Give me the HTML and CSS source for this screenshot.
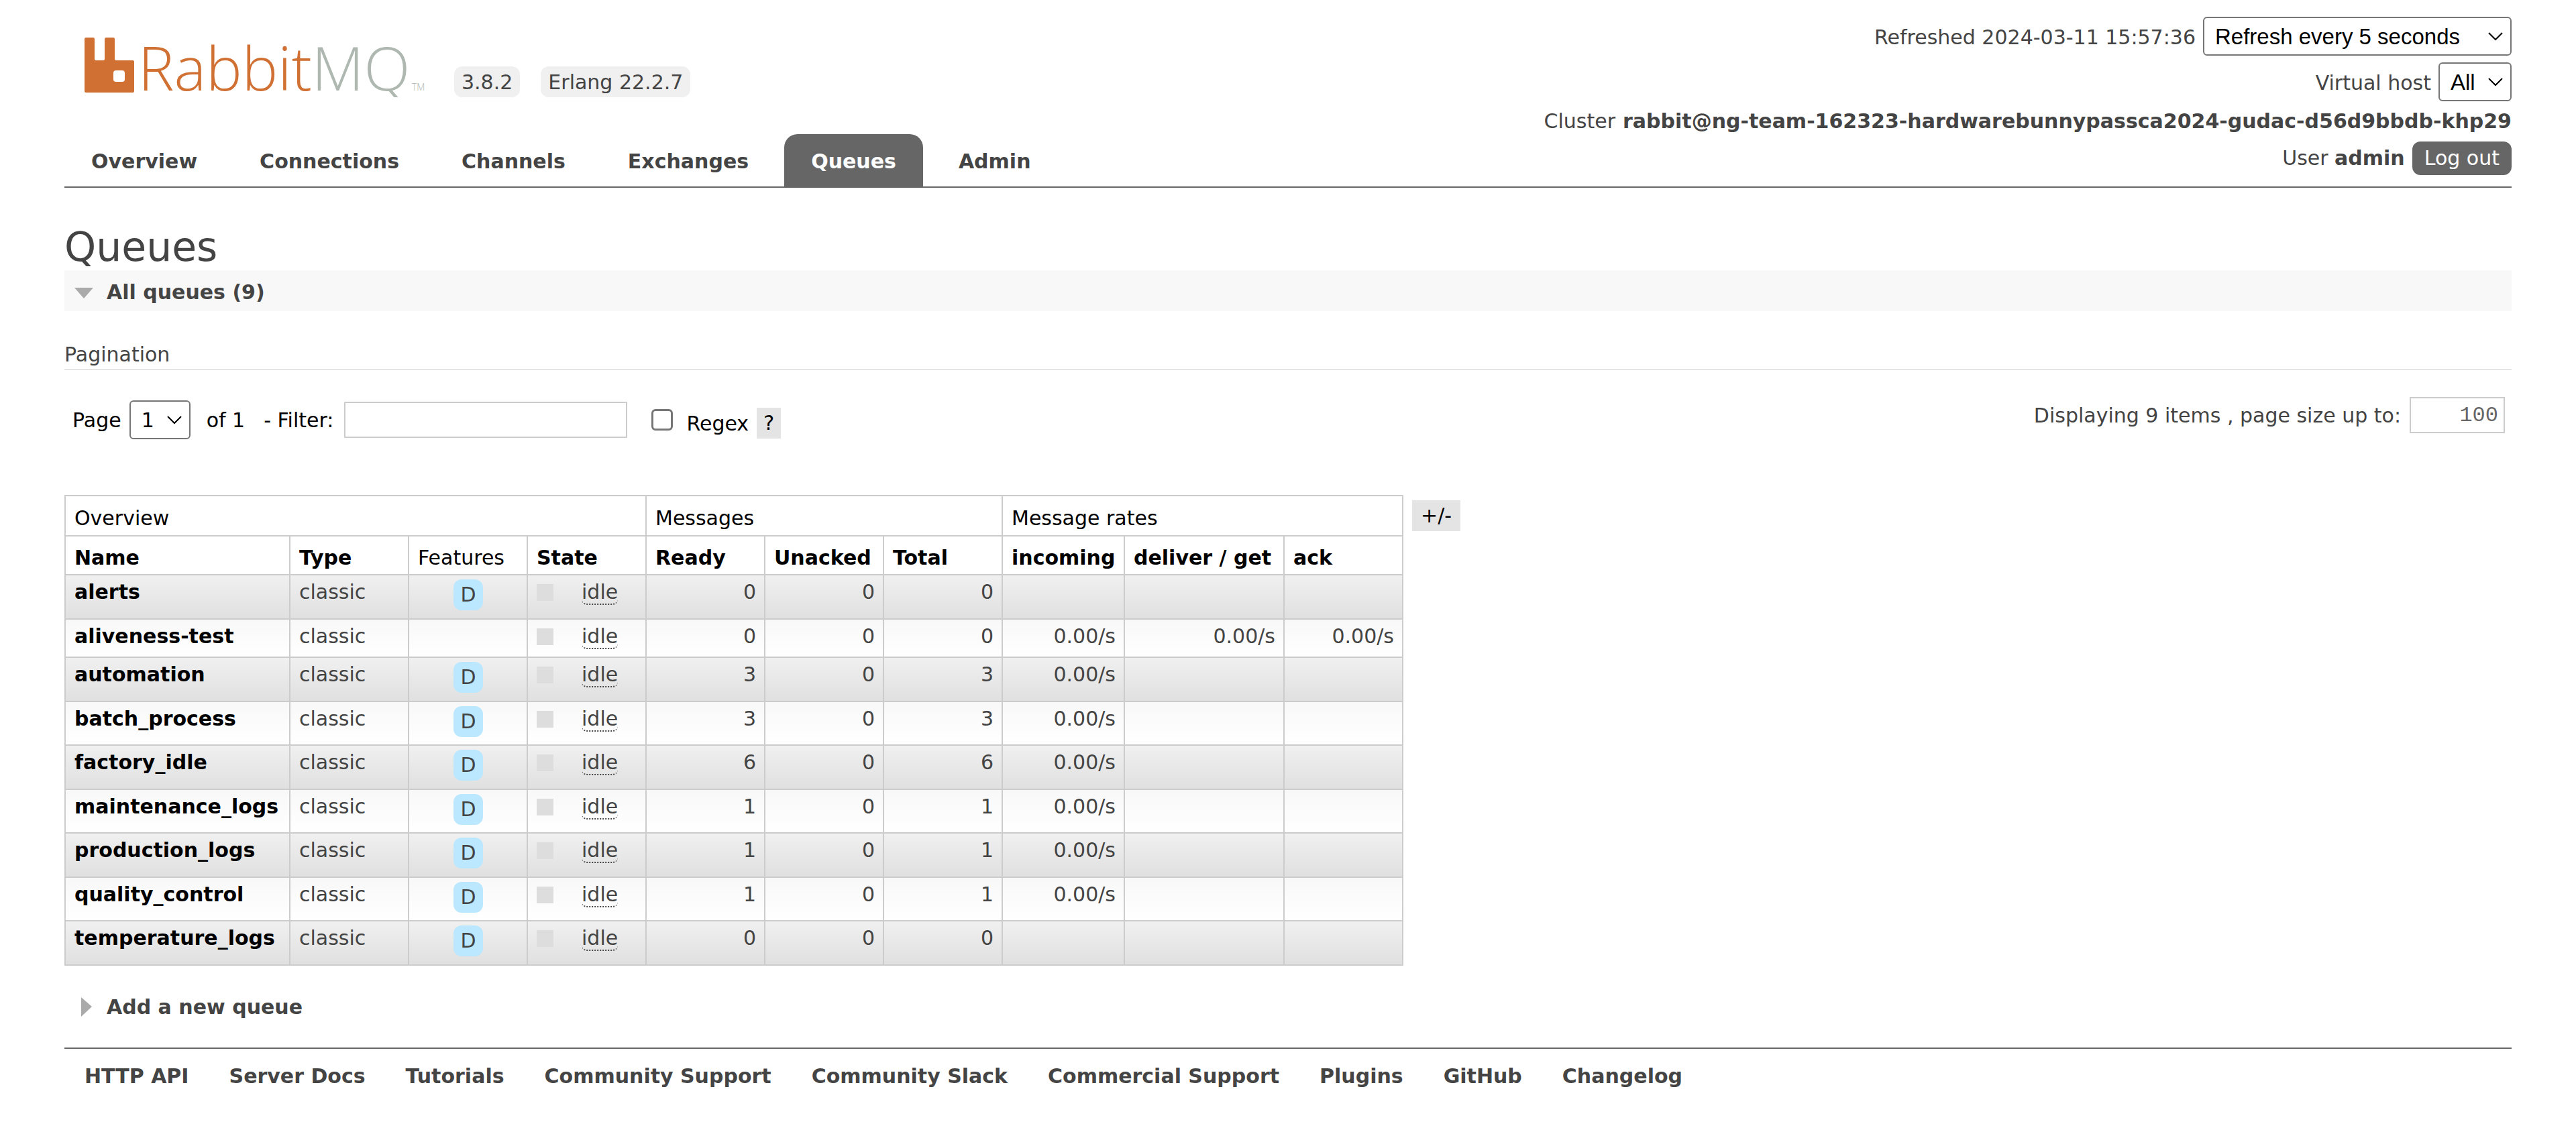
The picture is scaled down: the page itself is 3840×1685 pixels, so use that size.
FILE: index.html
```
<!DOCTYPE html>
<html lang="en">
<head>
    <meta charset="UTF-8">
    <meta name="viewport" content="width=device-width, initial-scale=1.0">
    <title>RabbitMQ Management</title>
    <link rel="stylesheet" href="styles.css">
</head>
<body>
    <header>
        <div class="header-left">
            <div class="brand">
                <svg class="logo" viewBox="0 0 550 105" role="img" aria-label="RabbitMQ">
                    <path fill="#d07033" fill-rule="evenodd" d="M32 16h11q2 0 2 2v30q0 2 2 2h11q2 0 2-2V18q0-2 2-2h11q2 0 2 2v30q0 2 2 2h25q2 0 2 2v44q0 2-2 2H32q-2 0-2-2V18q0-2 2-2zM77 65q-4 0-4 4v9q0 4 4 4h9q4 0 4-4v-9q0-4-4-4z"/>
                    <text class="logo-name" x="110" y="95"><tspan class="logo-rabbit">Rabbit</tspan><tspan class="logo-mq">MQ</tspan></text>
                    <text class="logo-tm" x="518" y="95">TM</text>
                </svg>
                <span class="version">3.8.2</span>
                <span class="version">Erlang 22.2.7</span>
            </div>
            <nav>
                <ul class="tabs">
                    <li><a href="#/">Overview</a></li>
                    <li><a href="#/connections">Connections</a></li>
                    <li><a href="#/channels">Channels</a></li>
                    <li><a href="#/exchanges">Exchanges</a></li>
                    <li><a href="#/queues" class="selected">Queues</a></li>
                    <li><a href="#/users">Admin</a></li>
                </ul>
            </nav>
        </div>

        <ul class="status">
            <li>
                <label for="update-every">Refreshed 2024-03-11 15:57:36</label>
                <select id="update-every" class="update-every">
                    <option>Refresh every 5 seconds</option>
                    <option>Refresh every 30 seconds</option>
                    <option>Do not refresh</option>
                </select>
            </li>
            <li>
                <label for="show-vhost">Virtual host</label>
                <select id="show-vhost" class="show-vhost">
                    <option>All</option>
                    <option>/</option>
                </select>
            </li>
            <li class="cluster">Cluster <b>rabbit@ng-team-162323-hardwarebunnypassca2024-gudac-d56d9bbdb-khp29</b></li>
            <li>
                <span>User <b>admin</b></span>
                <button class="logout">Log out</button>
            </li>
        </ul>
    </header>

    <main>
        <h1>Queues</h1>

        <h2 class="section-title open">
            <svg class="arrow" viewBox="0 0 30 30"><path fill="#aaa" d="M0 8h28L14 24z"/></svg>
            All queues (9)
        </h2>

        <h3>Pagination</h3>
        <div class="pagination">
            <div class="pager">
                <label for="page">Page</label>
                <select id="page" class="page-select"><option>1</option></select>
                <span class="page-count">of 1</span>
                <label for="filter">- Filter:</label>
                <input type="text" id="filter" class="filter">
                <input type="checkbox" id="regex" class="regex-box">
                <label for="regex" class="regex-label">Regex</label>
                <button class="help">?</button>
            </div>
            <div class="page-size">
                <label for="pagesize">Displaying 9 items , page size up to:</label>
                <input type="text" id="pagesize" class="pagesize" value="100">
            </div>
        </div>

        <div class="queues">
            <table class="list">
                <colgroup>
                    <col class="c-name"><col class="c-std"><col class="c-std"><col class="c-std">
                    <col class="c-std"><col class="c-std"><col class="c-std">
                    <col class="c-in"><col class="c-get"><col class="c-std">
                </colgroup>
                <thead>
                    <tr>
                        <th colspan="4">Overview</th>
                        <th colspan="3">Messages</th>
                        <th colspan="3">Message rates</th>
                    </tr>
                    <tr class="columns">
                        <th><a href="#name">Name</a></th>
                        <th><a href="#type">Type</a></th>
                        <th>Features</th>
                        <th><a href="#state">State</a></th>
                        <th><a href="#ready">Ready</a></th>
                        <th><a href="#unacked">Unacked</a></th>
                        <th><a href="#total">Total</a></th>
                        <th><a href="#incoming">incoming</a></th>
                        <th><a href="#deliver">deliver / get</a></th>
                        <th><a href="#ack">ack</a></th>
                    </tr>
                </thead>
                <tbody>
                    <tr class="alt1">
                        <td><a href="#/queues/alerts">alerts</a></td><td>classic</td>
                        <td class="c"><abbr class="tag">D</abbr></td>
                        <td><div class="state"><i></i><abbr>idle</abbr></div></td>
                        <td class="r">0</td><td class="r">0</td><td class="r">0</td>
                        <td class="r"></td><td class="r"></td><td class="r"></td>
                    </tr>
                    <tr class="alt2 short">
                        <td><a href="#/queues/aliveness-test">aliveness-test</a></td><td>classic</td>
                        <td class="c"></td>
                        <td><div class="state"><i></i><abbr>idle</abbr></div></td>
                        <td class="r">0</td><td class="r">0</td><td class="r">0</td>
                        <td class="r">0.00/s</td><td class="r">0.00/s</td><td class="r">0.00/s</td>
                    </tr>
                    <tr class="alt1">
                        <td><a href="#/queues/automation">automation</a></td><td>classic</td>
                        <td class="c"><abbr class="tag">D</abbr></td>
                        <td><div class="state"><i></i><abbr>idle</abbr></div></td>
                        <td class="r">3</td><td class="r">0</td><td class="r">3</td>
                        <td class="r">0.00/s</td><td class="r"></td><td class="r"></td>
                    </tr>
                    <tr class="alt2">
                        <td><a href="#/queues/batch_process">batch_process</a></td><td>classic</td>
                        <td class="c"><abbr class="tag">D</abbr></td>
                        <td><div class="state"><i></i><abbr>idle</abbr></div></td>
                        <td class="r">3</td><td class="r">0</td><td class="r">3</td>
                        <td class="r">0.00/s</td><td class="r"></td><td class="r"></td>
                    </tr>
                    <tr class="alt1">
                        <td><a href="#/queues/factory_idle">factory_idle</a></td><td>classic</td>
                        <td class="c"><abbr class="tag">D</abbr></td>
                        <td><div class="state"><i></i><abbr>idle</abbr></div></td>
                        <td class="r">6</td><td class="r">0</td><td class="r">6</td>
                        <td class="r">0.00/s</td><td class="r"></td><td class="r"></td>
                    </tr>
                    <tr class="alt2">
                        <td><a href="#/queues/maintenance_logs">maintenance_logs</a></td><td>classic</td>
                        <td class="c"><abbr class="tag">D</abbr></td>
                        <td><div class="state"><i></i><abbr>idle</abbr></div></td>
                        <td class="r">1</td><td class="r">0</td><td class="r">1</td>
                        <td class="r">0.00/s</td><td class="r"></td><td class="r"></td>
                    </tr>
                    <tr class="alt1">
                        <td><a href="#/queues/production_logs">production_logs</a></td><td>classic</td>
                        <td class="c"><abbr class="tag">D</abbr></td>
                        <td><div class="state"><i></i><abbr>idle</abbr></div></td>
                        <td class="r">1</td><td class="r">0</td><td class="r">1</td>
                        <td class="r">0.00/s</td><td class="r"></td><td class="r"></td>
                    </tr>
                    <tr class="alt2">
                        <td><a href="#/queues/quality_control">quality_control</a></td><td>classic</td>
                        <td class="c"><abbr class="tag">D</abbr></td>
                        <td><div class="state"><i></i><abbr>idle</abbr></div></td>
                        <td class="r">1</td><td class="r">0</td><td class="r">1</td>
                        <td class="r">0.00/s</td><td class="r"></td><td class="r"></td>
                    </tr>
                    <tr class="alt1">
                        <td><a href="#/queues/temperature_logs">temperature_logs</a></td><td>classic</td>
                        <td class="c"><abbr class="tag">D</abbr></td>
                        <td><div class="state"><i></i><abbr>idle</abbr></div></td>
                        <td class="r">0</td><td class="r">0</td><td class="r">0</td>
                        <td class="r"></td><td class="r"></td><td class="r"></td>
                    </tr>
                </tbody>
            </table>
            <button class="plus-minus">+/-</button>
        </div>

        <h2 class="section-title">
            <svg class="arrow" viewBox="0 0 30 30"><path fill="#aaa" d="M10 0l16 14-16 15z"/></svg>
            Add a new queue
        </h2>
    </main>

    <footer>
        <ul>
            <li><a href="api/">HTTP API</a></li>
            <li><a href="#docs">Server Docs</a></li>
            <li><a href="#tutorials">Tutorials</a></li>
            <li><a href="#support">Community Support</a></li>
            <li><a href="#slack">Community Slack</a></li>
            <li><a href="#commercial">Commercial Support</a></li>
            <li><a href="#plugins">Plugins</a></li>
            <li><a href="#github">GitHub</a></li>
            <li><a href="#changelog">Changelog</a></li>
        </ul>
    </footer>
</body>
</html>
```
FILE: styles.css
```
* {
    box-sizing: border-box;
}

body {
    font-family: Verdana, "DejaVu Sans", sans-serif;
    font-size: 30px;
    line-height: 35px;
    color: #444;
    background: #fff;
    margin: 0;
    padding: 0 96px;
}

ul {
    list-style: none;
    margin: 0;
    padding: 0;
}

a {
    color: #444;
    font-weight: bold;
    text-decoration: none;
}

button,
input {
    font: inherit;
    margin: 0;
}

select {
    appearance: none;
    font-family: "Liberation Sans", Arial, sans-serif;
    font-size: 33px;
    height: 58px;
    margin: 0;
    padding: 0 16px;
    color: #000;
    border: 2px solid #767676;
    border-radius: 6px;
    background: #fff url("data:image/svg+xml,%3Csvg xmlns='http://www.w3.org/2000/svg' width='24' height='14'%3E%3Cpath d='M2 2l10 10L22 2' fill='none' stroke='%23000' stroke-width='2'/%3E%3C/svg%3E") no-repeat right 10px center;
}

/* header */
header {
    display: flex;
    justify-content: space-between;
    border-bottom: 2px solid #666;
}

.header-left {
    display: flex;
    flex-direction: column;
    justify-content: space-between;
    padding-top: 40px;
}

.brand {
    display: flex;
    align-items: flex-end;
    gap: 31px;
}

.logo {
    width: 550px;
    height: 105px;
}

.logo-name {
    font-family: "Open Sans", sans-serif;
    font-size: 90px;
    font-weight: 300;
}

.logo-rabbit {
    fill: #d07033;
}

.logo-mq {
    fill: #aeb8b0;
}

.logo-tm {
    font-family: "Open Sans", sans-serif;
    font-size: 14px;
    font-weight: 300;
    fill: #aeb8b0;
}

.version {
    background: #f0f0f0;
    border-radius: 12px;
    padding: 6px 11px 5px;
}

.tabs {
    display: flex;
    gap: 13px;
}

.tabs a {
    display: block;
    padding: 23px 40px 20px;
    border-radius: 20px 20px 0 0;
}

.tabs a.selected {
    background: #666;
    color: #fff;
}

.status {
    display: flex;
    flex-direction: column;
    gap: 10px;
    padding: 25px 0 17px;
}

.status li {
    display: flex;
    justify-content: flex-end;
    align-items: baseline;
    gap: 11px;
}

.status .cluster {
    line-height: 40px;
}

.update-every {
    width: 460px;
}

.show-vhost {
    width: 109px;
}

.logout {
    background: #666;
    color: #fff;
    border: 0;
    border-radius: 12px;
    padding: 7px 18px 8px;
}

/* titles */
h1 {
    font-size: 60px;
    line-height: 70px;
    font-weight: normal;
    margin: 53px 0 0;
}

.section-title {
    display: flex;
    align-items: center;
    gap: 18px;
    font-size: 30px;
    margin: 0;
    padding: 15px 15px 11px;
    cursor: pointer;
}

.section-title.open {
    background: #f8f8f8;
}

.arrow {
    width: 30px;
    height: 30px;
}

h3 {
    font-size: 30px;
    font-weight: normal;
    margin: 47px 0 40px;
    padding-bottom: 4px;
    border-bottom: 2px solid #e4e4e4;
}

/* pagination */
.pagination {
    display: flex;
    justify-content: space-between;
    align-items: flex-start;
    padding: 0 10px 0 12px;
}

.pager {
    display: flex;
    align-items: center;
    gap: 12px;
    padding-top: 5px;
    color: #000;
}

.page-select {
    font-family: Verdana, "DejaVu Sans", sans-serif;
    width: 91px;
    font-size: 30px;
}

.page-count {
    margin: 0 16px 0 12px;
}

.filter {
    width: 422px;
    height: 54px;
    border: 2px solid #ccc;
    margin-left: 4px;
    padding: 8px;
}

.regex-box {
    appearance: none;
    width: 32px;
    height: 32px;
    border: 3px solid #767676;
    border-radius: 6px;
    margin: 0 8px 0 24px;
}

.regex-label,
.help {
    margin-top: 10px;
}

.help,
.plus-minus {
    background: #e4e4e4;
    border: 0;
    color: #000;
    padding: 5px 10px 6px;
}

.page-size {
    display: flex;
    align-items: center;
    gap: 13px;
}

.pagesize {
    width: 142px;
    height: 54px;
    padding: 8px;
    border: 2px solid #ccc;
    font-family: "Liberation Mono", monospace;
    font-size: 32px;
    color: #666;
    text-align: right;
}

/* queue list */
.queues {
    display: flex;
    align-items: flex-start;
    gap: 13px;
    margin: 83px 0 29px;
}

.list {
    border-collapse: collapse;
}

.c-name {
    width: 335px;
}

.c-std {
    width: 177px;
}

.c-in {
    width: 182px;
}

.c-get {
    width: 238px;
}

.list th,
.list td {
    border: 2px solid #ccc;
    white-space: nowrap;
}

.list th {
    color: #000;
    font-weight: normal;
    text-align: left;
    height: 60px;
    padding: 14px 12px 7px 13px;
}

.list .columns th {
    height: 58px;
}

.list a {
    color: #000;
}

.list td {
    height: 66px;
    padding: 7px 12px 0 13px;
    vertical-align: top;
}

.alt1 td {
    background: linear-gradient(#f0f0f0, #e0e0e0);
}

.list .alt2 td {
    height: 65px;
    background: linear-gradient(#f8f8f8, #fff);
}

.list .short td {
    height: 57px;
}

.list .r {
    text-align: right;
}

.list .c {
    text-align: center;
    padding-top: 6px;
}

.tag {
    display: inline-block;
    background: #bbe8ff;
    border-radius: 12px;
    padding: 5px 10px 6px;
}

.state {
    display: flex;
    align-items: center;
    gap: 42px;
}

.state i {
    width: 25px;
    height: 25px;
    background: #ddd;
}

.state abbr {
    border-bottom: 2px dotted #444;
    border-radius: 8px;
}

.plus-minus {
    margin-top: 8px;
    padding: 5px 13px 6px;
}

/* footer */
footer {
    border-top: 2px solid #666;
    margin-top: 32px;
    padding: 23px 30px;
}

footer ul {
    display: flex;
    gap: 60px;
}
```
